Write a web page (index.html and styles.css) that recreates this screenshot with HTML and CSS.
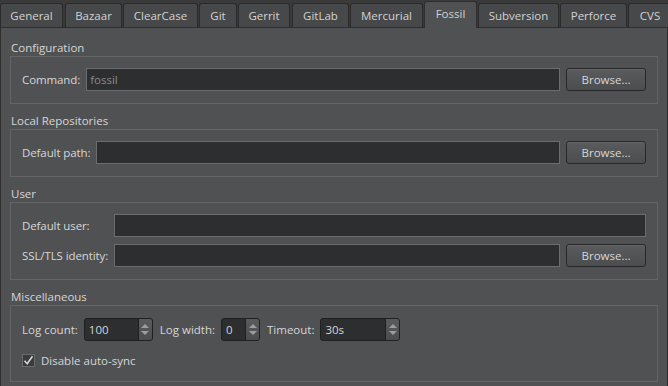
FILE: index.html
```html
<!DOCTYPE html>
<html lang="en">
  <head>
    <meta charset="UTF-8" />
    <title>Fossil settings</title>
    <link rel="stylesheet" href="styles.css">
  </head>
  <body>
    <nav class="tabs">
      <div class="tab">General</div>
      <div class="tab">Bazaar</div>
      <div class="tab">ClearCase</div>
      <div class="tab">Git</div>
      <div class="tab">Gerrit</div>
      <div class="tab">GitLab</div>
      <div class="tab">Mercurial</div>
      <div class="tab valgt">Fossil</div>
      <div class="tab">Subversion</div>
      <div class="tab">Perforce</div>
      <div class="tab">CVS</div>
    </nav>

    <main class="pane">
      <h3 class="title">Configuration</h3>
      <section class="box form">
        <label>Command:</label>
        <div class="field"><span class="hint">fossil</span></div>
        <button>Browse...</button>
      </section>

      <h3 class="title">Local Repositories</h3>
      <section class="box form">
        <label>Default path:</label>
        <div class="field"></div>
        <button>Browse...</button>
      </section>

      <h3 class="title">User</h3>
      <section class="box form">
        <label>Default user:</label>
        <div class="field wide"></div>
        <label>SSL/TLS identity:</label>
        <div class="field"></div>
        <button>Browse...</button>
      </section>

      <h3 class="title">Miscellaneous</h3>
      <section class="box misc">
        <div class="row">
          <label>Log count:</label>
          <div class="spin count"><span>100</span><div class="arrows"><i class="up"></i><i class="down"></i></div></div>
          <label>Log width:</label>
          <div class="spin width"><span>0</span><div class="arrows"><i class="up"></i><i class="down"></i></div></div>
          <label>Timeout:</label>
          <div class="spin timeout"><span>30s</span><div class="arrows"><i class="up"></i><i class="down"></i></div></div>
        </div>
        <div class="check">
          <span class="checkbox">
            <svg width="11" height="11" viewBox="0 0 11 11"><path d="M1.5 5.8 L4.2 8.8 L9.5 1.2" fill="none" stroke="#d8d8d8" stroke-width="1.6"/></svg>
          </span>
          <span>Disable auto-sync</span>
        </div>
      </section>
    </main>
  </body>
</html>
```

FILE: styles.css
```css
* {
  box-sizing: border-box;
  margin: 0;
  padding: 0;
}

body {
  background-color: #3a3a3b;
  font-family: "Open Sans", "Noto Sans", sans-serif;
  font-size: 11.5px;
  color: #d6d6d6;
  width: 668px;
  height: 386px;
  overflow: hidden;
}

/* tab bar */
.tabs {
  display: flex;
  align-items: flex-end;
  height: 27px;
  gap: 1px;
}
.tab {
  flex: none;
  height: 24px;
  line-height: 23px;
  text-align: center;
  background-color: #474849;
  border: 1px solid #2a2a2b;
  border-bottom: none;
  border-radius: 3px 3px 0 0;
  color: #d2d2d2;
}
.tab:nth-child(1) { width: 63px; }
.tab:nth-child(2) { width: 57px; margin-left: 1px; }
.tab:nth-child(3) { width: 75px; }
.tab:nth-child(4) { width: 38px; }
.tab:nth-child(5) { width: 52px; }
.tab:nth-child(6) { width: 57px; margin-left: 1px; }
.tab:nth-child(7) { width: 73px; }
.tab:nth-child(8) { width: 53px; }
.tab:nth-child(9) { width: 81px; margin-left: 0; }
.tab:nth-child(10) { width: 67px; }
.tab:nth-child(11) { width: 44px; }

.tab.valgt {
  height: 27px;
  line-height: 24px;
  background-color: #505153;
  border-color: #2e2e2f;
  margin-bottom: -1px;
  position: relative;
}

.pane {
  background-color: #505153;
  border: 1px solid #2e2e2f;
  border-bottom: none;
  height: 359px;
  padding: 3px 9px 0 9px;
}

.title {
  font-weight: normal;
  font-size: 11.5px;
  height: 25px;
  line-height: 24px;
  padding-top: 5px;
  padding-left: 1px;
  overflow: visible;
}

.box {
  border: 1px solid #636466;
}

.form {
  display: grid;
  grid-template-columns: auto 1fr 80px;
  column-gap: 6px;
  row-gap: 7px;
  align-items: center;
  padding: 11px 11px 12px 11px;
}
.form label {
  letter-spacing: -0.1px;
}

.field {
  height: 23px;
  background-color: #2d2e30;
  border: 1px solid #6b6c6e;
  padding-left: 3px;
  line-height: 21px;
}
.field.wide {
  grid-column: span 2;
}
.hint {
  color: #8b8c8d;
}

button {
  height: 23px;
  font-family: inherit;
  font-size: 11.5px;
  color: #d6d6d6;
  background: linear-gradient(#5a5b5d, #4c4d4f);
  border: 1px solid #27282a;
  border-radius: 3px;
  box-shadow: inset 0 1px 0 #646567;
}

.misc {
  padding: 12px 11px 14px 11px;
}
.row {
  display: flex;
  align-items: center;
  gap: 6px;
}
.row .spin + label {
  margin-left: 1px;
}
.spin {
  display: flex;
  height: 23px;
  background-color: #2d2e30;
  border: 1px solid #1f2021;
  border-radius: 3px;
  overflow: hidden;
}
.spin span {
  flex: 1;
  padding-left: 4px;
  line-height: 21px;
}
.count {
  width: 69px;
}
.width {
  width: 39px;
}
.timeout {
  width: 80px;
}
.arrows {
  width: 14px;
  display: flex;
  flex-direction: column;
  justify-content: center;
  align-items: center;
  gap: 3px;
  background: linear-gradient(#5a5b5d, #4c4d4f);
  border-left: 1px solid #1f2021;
}
.arrows i {
  width: 0;
  height: 0;
  border-left: 4px solid transparent;
  border-right: 4px solid transparent;
}
.arrows .up {
  border-bottom: 4px solid #9c9d9f;
}
.arrows .down {
  border-top: 4px solid #9c9d9f;
}

.check {
  display: flex;
  align-items: center;
  gap: 6px;
  margin-top: 13px;
  height: 13px;
}
.checkbox {
  width: 13px;
  height: 13px;
  border: 1px solid #6b6c6e;
  background-color: #3a3b3d;
  display: flex;
  align-items: center;
  justify-content: center;
}
```
